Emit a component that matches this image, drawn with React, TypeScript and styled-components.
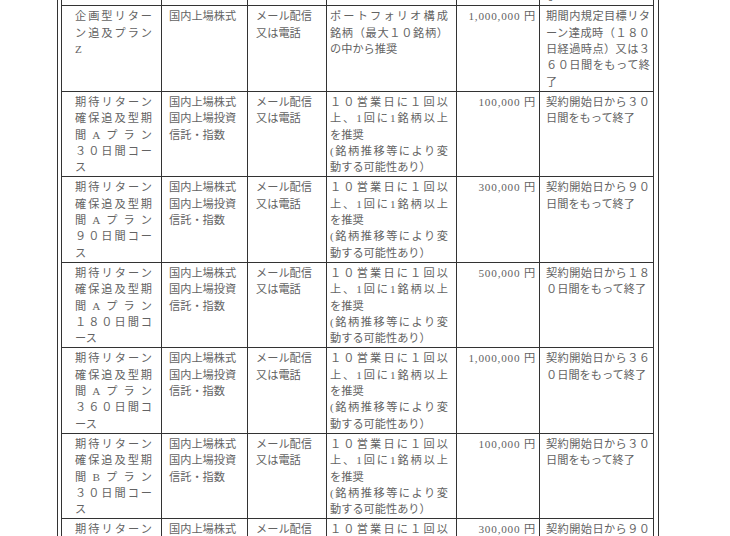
import React from "react";
import styled, { createGlobalStyle } from "styled-components";

const Global = createGlobalStyle`
  html, body { margin: 0; padding: 0; background: #fff; overflow: hidden; }
  body { font-family: "Liberation Serif", "Noto Sans CJK JP", serif; }
`;

const Page = styled.div`
  padding-left: 57px;
  margin-top: -79px;
`;

const Frame = styled.div`
  width: max-content;
  border-left: 1px solid #333;
  border-right: 1px solid #333;
  padding: 0 4px 0 3px;
`;

const Sheet = styled.div`
  border-left: 1px solid #333;
`;

const Row = styled.div`
  display: grid;
  grid-template-columns: 100px 86px 79px 130px 83px 114px;
  border-bottom: 1px solid #333;
`;

const Cell = styled.div`
  border-right: 1px solid #333;
  padding-top: 2px;
  padding-bottom: 1px;
  font-size: 11.2px;
  line-height: 16.3px;
  color: #636363;
  min-width: 0;
`;

const NameCell = styled(Cell)`
  padding-left: 13px;
  padding-right: 9px;
`;

const TypeCell = styled(Cell)`
  padding-left: 7px;
  padding-right: 4px;
`;

const ContactCell = styled(Cell)`
  padding-left: 8px;
  padding-right: 4px;
`;

const AdviceCell = styled(Cell)`
  padding-left: 3px;
  padding-right: 8px;
`;

const FeeCell = styled(Cell)`
  padding-right: 3px;
  text-align: right;
  letter-spacing: 0.8px;
`;

const TermCell = styled(Cell)`
  padding-left: 6px;
  padding-right: 3px;
`;

const Line = styled.span<{ $j?: boolean }>`
  display: block;
  text-align: ${(p) => (p.$j ? "justify" : "left")};
  text-align-last: ${(p) => (p.$j ? "justify" : "auto")};
`;

type L = [string, boolean?];

interface Plan {
  name: L[];
  type: L[];
  contact: L[];
  advice: L[];
  fee: string;
  term: L[];
}

const stock: L[] = [["国内上場株式"], ["国内上場投資"], ["信託・指数"]];
const contact: L[] = [["メール配信"], ["又は電話"]];
const advice: L[] = [
  ["１０営業日に１回以", true],
  ["上、1回に1銘柄以上", true],
  ["を推奨"],
  ["(銘柄推移等により変", true],
  ["動する可能性あり）"],
];
const portfolio: L[] = [
  ["ポートフォリオ構成", true],
  ["銘柄（最大１０銘柄）", true],
  ["の中から推奨"],
];
const targetTerm: L[] = [
  ["期間内規定目標リタ", true],
  ["ーン達成時（１８０", true],
  ["日経過時点）又は３", true],
  ["６０日間をもって終", true],
  ["了"],
];
const term = (a: string, b: string): L[] => [[a, true], [b]];

const plans: Plan[] = [
  {
    name: [["企画型リター", true], ["ン追及プラン", true], ["Y"]],
    type: [["国内上場株式"]],
    contact,
    advice: portfolio,
    fee: "1,000,000 円",
    term: targetTerm,
  },
  {
    name: [["企画型リター", true], ["ン追及プラン", true], ["Z"]],
    type: [["国内上場株式"]],
    contact,
    advice: portfolio,
    fee: "1,000,000 円",
    term: targetTerm,
  },
  {
    name: [["期待リターン", true], ["確保追及型期", true], ["間Aプラン", true], ["３０日間コー", true], ["ス"]],
    type: stock,
    contact,
    advice,
    fee: "100,000 円",
    term: term("契約開始日から３０", "日間をもって終了"),
  },
  {
    name: [["期待リターン", true], ["確保追及型期", true], ["間Aプラン", true], ["９０日間コー", true], ["ス"]],
    type: stock,
    contact,
    advice,
    fee: "300,000 円",
    term: term("契約開始日から９０", "日間をもって終了"),
  },
  {
    name: [["期待リターン", true], ["確保追及型期", true], ["間Aプラン", true], ["１８０日間コ", true], ["ース"]],
    type: stock,
    contact,
    advice,
    fee: "500,000 円",
    term: term("契約開始日から１８", "０日間をもって終了"),
  },
  {
    name: [["期待リターン", true], ["確保追及型期", true], ["間Aプラン", true], ["３６０日間コ", true], ["ース"]],
    type: stock,
    contact,
    advice,
    fee: "1,000,000 円",
    term: term("契約開始日から３６", "０日間をもって終了"),
  },
  {
    name: [["期待リターン", true], ["確保追及型期", true], ["間Bプラン", true], ["３０日間コー", true], ["ス"]],
    type: stock,
    contact,
    advice,
    fee: "100,000 円",
    term: term("契約開始日から３０", "日間をもって終了"),
  },
  {
    name: [["期待リターン", true], ["確保追及型期", true], ["間Bプラン", true], ["９０日間コー", true], ["ス"]],
    type: stock,
    contact,
    advice,
    fee: "300,000 円",
    term: term("契約開始日から９０", "日間をもって終了"),
  },
];

const Lines = ({ items }: { items: L[] }) => (
  <>
    {items.map(([t, j], i) => (
      <Line key={i} $j={j}>
        {t}
      </Line>
    ))}
  </>
);

export default function App() {
  return (
    <>
      <Global />
      <Page>
        <Frame>
          <Sheet>
            {plans.map((p, i) => (
              <Row key={i}>
                <NameCell>
                  <Lines items={p.name} />
                </NameCell>
                <TypeCell>
                  <Lines items={p.type} />
                </TypeCell>
                <ContactCell>
                  <Lines items={p.contact} />
                </ContactCell>
                <AdviceCell>
                  <Lines items={p.advice} />
                </AdviceCell>
                <FeeCell>{p.fee}</FeeCell>
                <TermCell>
                  <Lines items={p.term} />
                </TermCell>
              </Row>
            ))}
          </Sheet>
        </Frame>
      </Page>
    </>
  );
}
